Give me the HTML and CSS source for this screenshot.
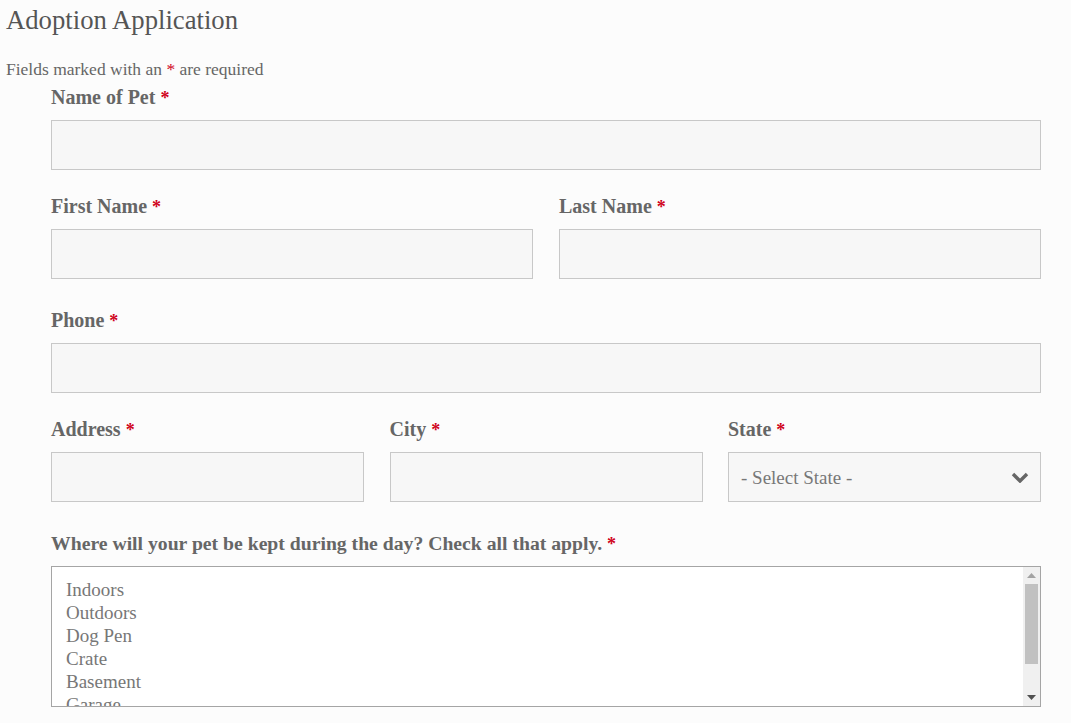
FILE: index.html
```html
<!DOCTYPE html>
<html>
<head>
<meta charset="utf-8">
<link rel="stylesheet" href="styles.css">
</head>
<body>
<h1 class="title">Adoption Application</h1>
<p class="note">Fields marked with an <span class="req">*</span> are required</p>
<form class="form">
  <div class="row">
    <div class="field">
      <label class="label">Name of Pet <span class="req">*</span></label>
      <div class="input"></div>
    </div>
  </div>
  <div class="row multi cols-2">
    <div class="field">
      <label class="label">First Name <span class="req">*</span></label>
      <div class="input"></div>
    </div>
    <div class="field">
      <label class="label">Last Name <span class="req">*</span></label>
      <div class="input"></div>
    </div>
  </div>
  <div class="row">
    <div class="field">
      <label class="label">Phone <span class="req">*</span></label>
      <div class="input"></div>
    </div>
  </div>
  <div class="row multi cols-3">
    <div class="field">
      <label class="label">Address <span class="req">*</span></label>
      <div class="input"></div>
    </div>
    <div class="field">
      <label class="label">City <span class="req">*</span></label>
      <div class="input"></div>
    </div>
    <div class="field">
      <label class="label">State <span class="req">*</span></label>
      <div class="input select">
        <span class="select-text">- Select State -</span>
        <svg class="chevron" width="18" height="11" viewBox="0 0 18 11"><path d="M2 2 L9 9 L16 2" fill="none" stroke="#666" stroke-width="3.4" stroke-linecap="butt" stroke-linejoin="miter"/></svg>
      </div>
    </div>
  </div>
  <div class="row">
    <div class="field">
      <label class="label label-q">Where will your pet be kept during the day? Check all that apply. <span class="req">*</span></label>
      <div class="listbox">
        <ul class="options">
          <li>Indoors</li>
          <li>Outdoors</li>
          <li>Dog Pen</li>
          <li>Crate</li>
          <li>Basement</li>
          <li>Garage</li>
        </ul>
        <div class="scrollbar">
          <div class="sb-btn"><svg width="9" height="5" viewBox="0 0 9 5"><path d="M0 5 L4.5 0 L9 5 Z" fill="#a3a3a3"/></svg></div>
          <div class="sb-track"><div class="sb-thumb"></div></div>
          <div class="sb-btn"><svg width="9" height="5" viewBox="0 0 9 5"><path d="M0 0 L9 0 L4.5 5 Z" fill="#505050"/></svg></div>
        </div>
      </div>
    </div>
  </div>
</form>
</body>
</html>
```
FILE: styles.css
```css
html, body {
  margin: 0;
  padding: 0;
  background: #fcfcfc;
}
body {
  font-family: "Liberation Serif", "Times New Roman", serif;
  color: #666;
  height: 723px;
  overflow: hidden;
}
.title {
  margin: 5px 0 0 6px;
  height: 30px;
  font-size: 26.7px;
  line-height: 30px;
  font-weight: normal;
  color: #555;
}
.note {
  margin: 24px 0 0 6px;
  height: 20px;
  font-size: 17.5px;
  line-height: 20px;
  color: #666;
}
.req {
  color: #d0021b;
}
.form {
  margin: 5px 0 0 51px;
  width: 990px;
}
.row {
  margin-bottom: 23px;
}
.row.multi {
  margin-bottom: 28px;
}
.cols-2 {
  display: grid;
  grid-template-columns: 1fr 1fr;
  column-gap: 26px;
}
.cols-3 {
  display: grid;
  grid-template-columns: 1fr 1fr 1fr;
  column-gap: 25.5px;
}
.field {
  display: flex;
  flex-direction: column;
}
.label {
  display: block;
  box-sizing: border-box;
  height: 24px;
  padding-top: 2px;
  font-size: 20px;
  line-height: 22px;
  font-weight: bold;
  color: #666;
  margin-bottom: 12px;
  white-space: nowrap;
  overflow: visible;
}
.label .req {
  font-size: 18px;
  line-height: 1;
}
.label-q {
  font-size: 19.7px;
}
.input {
  box-sizing: border-box;
  height: 50px;
  background: #f7f7f7;
  border: 1px solid #c8c8c8;
}
.select {
  display: flex;
  align-items: center;
  justify-content: space-between;
  padding: 0 11px 0 12px;
}
.select-text {
  font-size: 19px;
  color: #777;
  line-height: 24px;
  padding-top: 1px;
}
.chevron {
  display: block;
}
.listbox {
  box-sizing: border-box;
  height: 141px;
  background: #fff;
  border: 1px solid #a5a5a5;
  display: flex;
  overflow: hidden;
}
.options {
  flex: 1;
  list-style: none;
  margin: 0;
  padding: 11px 0 0 14px;
  font-size: 19px;
  line-height: 23px;
  color: #777;
  overflow: hidden;
}
.scrollbar {
  width: 17px;
  background: #f0f0f0;
  display: flex;
  flex-direction: column;
}
.sb-btn {
  height: 17px;
  display: flex;
  align-items: center;
  justify-content: center;
}
.sb-track {
  flex: 1;
  padding: 0 2px;
}
.sb-thumb {
  height: 80px;
  background: #c1c1c1;
}
```
